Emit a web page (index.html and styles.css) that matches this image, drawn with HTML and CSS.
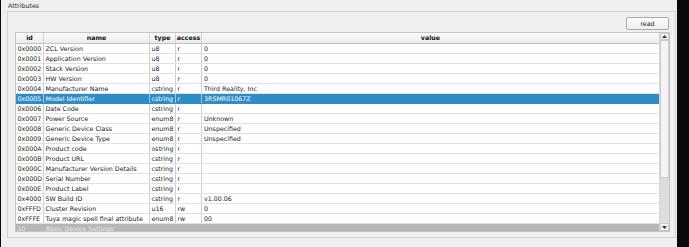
FILE: index.html
```html
<!DOCTYPE html>
<html>
<head>
<meta charset="utf-8">
<link rel="stylesheet" href="styles.css">
</head>
<body>
<div class="screen">
  <div class="window">
    <div class="title">Attributes</div>
    <div class="frame">
      <div class="toolbar"><button class="btn">read</button></div>
      <div class="view">
        <div class="viewport">
          <div class="row head">
            <div class="cell">id</div><div class="cell">name</div><div class="cell">type</div><div class="cell">access</div><div class="cell">value</div>
          </div>
          <div class="row"><div class="cell">0x0000</div><div class="cell">ZCL Version</div><div class="cell">u8</div><div class="cell">r</div><div class="cell">0</div></div>
          <div class="row"><div class="cell">0x0001</div><div class="cell">Application Version</div><div class="cell">u8</div><div class="cell">r</div><div class="cell">0</div></div>
          <div class="row"><div class="cell">0x0002</div><div class="cell">Stack Version</div><div class="cell">u8</div><div class="cell">r</div><div class="cell">0</div></div>
          <div class="row"><div class="cell">0x0003</div><div class="cell">HW Version</div><div class="cell">u8</div><div class="cell">r</div><div class="cell">0</div></div>
          <div class="row"><div class="cell">0x0004</div><div class="cell">Manufacturer Name</div><div class="cell">cstring</div><div class="cell">r</div><div class="cell">Third Reality, Inc</div></div>
          <div class="row selected"><div class="cell">0x0005</div><div class="cell">Model Identifier</div><div class="cell">cstring</div><div class="cell">r</div><div class="cell">3RSMR01067Z</div></div>
          <div class="row"><div class="cell">0x0006</div><div class="cell">Date Code</div><div class="cell">cstring</div><div class="cell">r</div><div class="cell"></div></div>
          <div class="row"><div class="cell">0x0007</div><div class="cell">Power Source</div><div class="cell">enum8</div><div class="cell">r</div><div class="cell">Unknown</div></div>
          <div class="row"><div class="cell">0x0008</div><div class="cell">Generic Device Class</div><div class="cell">enum8</div><div class="cell">r</div><div class="cell">Unspecified</div></div>
          <div class="row"><div class="cell">0x0009</div><div class="cell">Generic Device Type</div><div class="cell">enum8</div><div class="cell">r</div><div class="cell">Unspecified</div></div>
          <div class="row"><div class="cell">0x000A</div><div class="cell">Product code</div><div class="cell">ostring</div><div class="cell">r</div><div class="cell"></div></div>
          <div class="row"><div class="cell">0x000B</div><div class="cell">Product URL</div><div class="cell">cstring</div><div class="cell">r</div><div class="cell"></div></div>
          <div class="row"><div class="cell">0x000C</div><div class="cell">Manufacturer Version Details</div><div class="cell">cstring</div><div class="cell">r</div><div class="cell"></div></div>
          <div class="row"><div class="cell">0x000D</div><div class="cell">Serial Number</div><div class="cell">cstring</div><div class="cell">r</div><div class="cell"></div></div>
          <div class="row"><div class="cell">0x000E</div><div class="cell">Product Label</div><div class="cell">cstring</div><div class="cell">r</div><div class="cell"></div></div>
          <div class="row"><div class="cell">0x4000</div><div class="cell">SW Build ID</div><div class="cell">cstring</div><div class="cell">r</div><div class="cell">v1.00.06</div></div>
          <div class="row"><div class="cell">0xFFFD</div><div class="cell">Cluster Revision</div><div class="cell">u16</div><div class="cell">rw</div><div class="cell">0</div></div>
          <div class="row"><div class="cell">0xFFFE</div><div class="cell">Tuya magic spell final attribute</div><div class="cell">enum8</div><div class="cell">rw</div><div class="cell">00</div></div>
          <div class="row group"><div class="cell">10</div><div class="cell">Basic Device Settings</div></div>
        </div>
        <div class="scrollbar">
          <div class="arrow up"><svg width="5" height="3" viewBox="0 0 5 3"><path d="M0 3 L2.5 0 L5 3 Z" fill="#333"/></svg></div>
          <div class="track"><div class="handle"></div></div>
          <div class="arrow down"><svg width="5" height="3" viewBox="0 0 5 3"><path d="M0 0 L5 0 L2.5 3 Z" fill="#333"/></svg></div>
        </div>
      </div>
    </div>
  </div>
</div>
</body>
</html>
```
FILE: styles.css
```css
html, body {
  margin: 0;
  padding: 0;
  background: #000;
}
body {
  font-family: "DejaVu Sans", sans-serif;
  font-size: 6.3px;
  color: #1a1a1a;
}
.screen {
  display: flex;
  height: 247px;
  width: 689px;
  background: #0a0a0a;
}
.window {
  margin-left: 1px;
  width: 676px;
  height: 247px;
  background: #efefef;
  display: flex;
  flex-direction: column;
}
.title {
  height: 11px;
  line-height: 11px;
  padding-left: 7px;
  color: #2a2a2a;
}
.frame {
  margin-left: 6px;
  width: 655px;
  height: 220px;
  border: 1px solid #d2d2d2;
  padding: 5px 5px 0 7px;
  display: flex;
  flex-direction: column;
}
.toolbar {
  display: flex;
  justify-content: flex-end;
  padding-right: 1px;
  margin-bottom: 2px;
}
.btn {
  width: 43px;
  height: 13px;
  padding: 0;
  border: 1px solid #ababab;
  border-radius: 2px;
  background: linear-gradient(#fdfdfd, #eeeeee);
  font-family: "DejaVu Sans", sans-serif;
  font-size: 6.3px;
  color: #1a1a1a;
  line-height: 11px;
}
.view {
  display: flex;
  height: 198px;
  border: 1px solid #c4c4c4;
}
.viewport {
  flex: 1;
  overflow: hidden;
  background: #fff;
}
.row {
  display: grid;
  grid-template-columns: 28px 106px 26px 26px 1fr;
  height: 9px;
  line-height: 9px;
  border-bottom: 1px solid #e2e2e2;
  white-space: nowrap;
}
.cell {
  padding-left: 1.5px;
  border-right: 1px solid #cfcfcf;
  overflow: hidden;
}
.cell:last-child {
  border-right: none;
  padding-left: 2px;
}
.row.head {
  height: 10px;
  line-height: 10px;
  background: linear-gradient(#fbfbfb, #ececec);
  border-bottom: 1px solid #c2c2c2;
  font-weight: bold;
  color: #111;
}
.row.head .cell {
  text-align: center;
  padding-left: 0;
  border-right-color: #d4d4d4;
}
.row.selected {
  background: #308cc6;
  color: #fff;
  border-bottom-color: #308cc6;
}
.row.selected .cell {
  border-right-color: #9cc8e4;
}
.row.group {
  grid-template-columns: 28px 1fr;
  background: #b6b6b6;
  color: #e8e8e8;
  border-bottom: none;
}
.row.group .cell {
  border-right: none;
}
.scrollbar {
  width: 9px;
  display: flex;
  flex-direction: column;
  background: #e0e0e0;
  border-left: 1px solid #d6d6d6;
}
.arrow {
  height: 7px;
  display: flex;
  align-items: center;
  justify-content: center;
  background: #f6f6f6;
  border: 1px solid #cdcdcd;
  box-sizing: border-box;
}
.arrow.down {
  height: 8px;
}
.track {
  flex: 1;
  display: flex;
  flex-direction: column;
  background: #dddddd;
}
.handle {
  height: 138px;
  background: #f3f3f3;
  border: 1px solid #cbcbcb;
  box-sizing: border-box;
}
```
